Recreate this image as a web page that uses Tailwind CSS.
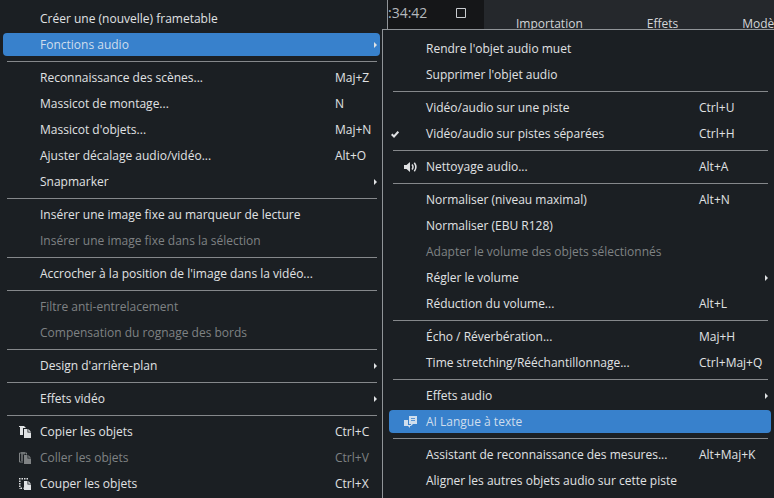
<!DOCTYPE html>
<html lang="fr">

<head>
    <meta charset="UTF-8">
    <meta name="viewport" content="width=device-width, initial-scale=1.0">
    <title>Fonctions audio</title>
    <script src="https://cdn.jsdelivr.net/npm/@tailwindcss/browser@4"></script>
</head>

<body class="relative min-h-screen overflow-hidden bg-[#1b1f23] font-['Open_Sans','Noto_Sans',sans-serif] text-xs text-[#e0e2e4]">
    <!-- Application bar behind the menus -->
    <header class="flex h-[30px] pl-[388px]">
        <div class="flex w-24 shrink-0 items-center justify-between bg-[#151618] pr-[18px] pb-1 text-[#b4b8bc]">
            <span class="text-sm">:34:42</span>
            <svg class="size-[10px]" viewBox="0 0 10 10" fill="none" stroke="#c9ccd0"><path d="M.5 .5h9v9h-9z"/></svg>
        </div>
        <nav class="flex flex-1 gap-16 overflow-hidden bg-[#25282c] pt-4 pl-8 leading-4 text-[#d3d5d8]">
            <a href="#">Importation</a>
            <a href="#">Effets</a>
            <a href="#">Modèles</a>
        </nav>
    </header>

    <!-- Main menu -->
    <div role="menu" class="absolute inset-y-0 left-0 grid w-[388px] content-start border-r border-[#909498] bg-[#1b1f23] pt-[6px] pr-[7px] pl-[3px]">
        <button role="menuitem" class="grid h-[26px] w-full grid-cols-[37px_1fr_45px] items-center text-left"><span class="col-start-2">Créer une (nouvelle) frametable</span></button>
        <button role="menuitem" class="mt-px mb-[2px] grid h-[23px] w-full grid-cols-[37px_1fr_6px] items-center rounded bg-[#3881cc] text-left text-[#cfdeed]"><span class="col-start-2">Fonctions audio</span><svg class="h-[6px] w-[3px]" viewBox="0 0 3 6" fill="#e0e2e4"><path d="M0 0l3 3-3 3z"/></svg></button>
        <hr class="mr-[3px] ml-1 my-[3px] border-[#85888b]">
        <button role="menuitem" class="grid h-[26px] w-full grid-cols-[37px_1fr_45px] items-center text-left"><span class="col-start-2">Reconnaissance des scènes...</span><span>Maj+Z</span></button>
        <button role="menuitem" class="grid h-[26px] w-full grid-cols-[37px_1fr_45px] items-center text-left"><span class="col-start-2">Massicot de montage...</span><span>N</span></button>
        <button role="menuitem" class="grid h-[26px] w-full grid-cols-[37px_1fr_45px] items-center text-left"><span class="col-start-2">Massicot d'objets...</span><span>Maj+N</span></button>
        <button role="menuitem" class="grid h-[26px] w-full grid-cols-[37px_1fr_45px] items-center text-left"><span class="col-start-2">Ajuster décalage audio/vidéo...</span><span>Alt+O</span></button>
        <button role="menuitem" class="grid h-[26px] w-full grid-cols-[37px_1fr_6px] items-center text-left"><span class="col-start-2">Snapmarker</span><svg class="h-[6px] w-[3px]" viewBox="0 0 3 6" fill="#e0e2e4"><path d="M0 0l3 3-3 3z"/></svg></button>
        <hr class="mr-[3px] ml-1 my-[3px] border-[#85888b]">
        <button role="menuitem" class="grid h-[26px] w-full grid-cols-[37px_1fr_45px] items-center text-left"><span class="col-start-2">Insérer une image fixe au marqueur de lecture</span></button>
        <button role="menuitem" disabled class="grid h-[26px] w-full grid-cols-[37px_1fr_45px] items-center text-left text-[#7f8284]"><span class="col-start-2">Insérer une image fixe dans la sélection</span></button>
        <hr class="mr-[3px] ml-1 my-[3px] border-[#85888b]">
        <button role="menuitem" class="grid h-[26px] w-full grid-cols-[37px_1fr_45px] items-center text-left"><span class="col-start-2">Accrocher à la position de l'image dans la vidéo...</span></button>
        <hr class="mr-[3px] ml-1 my-[3px] border-[#85888b]">
        <button role="menuitem" disabled class="grid h-[26px] w-full grid-cols-[37px_1fr_45px] items-center text-left text-[#7f8284]"><span class="col-start-2">Filtre anti-entrelacement</span></button>
        <button role="menuitem" disabled class="grid h-[26px] w-full grid-cols-[37px_1fr_45px] items-center text-left text-[#7f8284]"><span class="col-start-2">Compensation du rognage des bords</span></button>
        <hr class="mr-[3px] ml-1 my-[3px] border-[#85888b]">
        <button role="menuitem" class="grid h-[26px] w-full grid-cols-[37px_1fr_6px] items-center text-left"><span class="col-start-2">Design d'arrière-plan</span><svg class="h-[6px] w-[3px]" viewBox="0 0 3 6" fill="#e0e2e4"><path d="M0 0l3 3-3 3z"/></svg></button>
        <hr class="mr-[3px] ml-1 my-[3px] border-[#85888b]">
        <button role="menuitem" class="grid h-[26px] w-full grid-cols-[37px_1fr_6px] items-center text-left"><span class="col-start-2">Effets vidéo</span><svg class="h-[6px] w-[3px]" viewBox="0 0 3 6" fill="#e0e2e4"><path d="M0 0l3 3-3 3z"/></svg></button>
        <hr class="mr-[3px] ml-1 my-[3px] border-[#85888b]">
        <button role="menuitem" class="grid h-[26px] w-full grid-cols-[37px_1fr_45px] items-center text-left">
            <svg class="ml-4 h-3 w-3" viewBox="0 0 12 12" fill="currentColor"><path d="M0 0h5l2 2H4v7H1V1H0z"/><path d="M5 3h3.500v3.500H12V12H5z"/><path d="M9.300 3L12 5.700H9.300z"/></svg>
            <span>Copier les objets</span><span>Ctrl+C</span>
        </button>
        <button role="menuitem" disabled class="grid h-[26px] w-full grid-cols-[37px_1fr_45px] items-center text-left text-[#7f8284]">
            <svg class="ml-4 h-3 w-3" viewBox="0 0 12 12" fill="currentColor"><path d="M.5 1h7v1.500M.5 1v9H4" fill="none" stroke="currentColor"/><path d="M2 0h4v2.500H4V9H2z" opacity=".7"/><path d="M5 3h3.500v3.500H12V12H5z"/><path d="M9.300 3L12 5.700H9.300z"/></svg>
            <span>Coller les objets</span><span>Ctrl+V</span>
        </button>
        <button role="menuitem" class="grid h-[26px] w-full grid-cols-[37px_1fr_45px] items-center text-left">
            <svg class="ml-4 h-3 w-3" viewBox="0 0 12 12" fill="currentColor"><path d="M0 .8h10M.8 2.500v8M1.500 10.200h3" fill="none" stroke="currentColor" stroke-width="1.500" stroke-dasharray="1.500 1"/><path d="M5 3h3.500v3.500H12V12H5z"/><path d="M9.300 3L12 5.700H9.300z"/></svg>
            <span>Couper les objets</span><span>Ctrl+X</span>
        </button>
    </div>

    <!-- Audio submenu -->
    <div role="menu" class="absolute top-[29px] right-0 bottom-0 left-[382px] grid content-start border-t border-l border-[#909498] bg-[#1b1f23] pt-[6px] pr-[3px] pl-[6px]">
        <button role="menuitem" class="grid h-[26px] w-full grid-cols-[37px_1fr_72px] items-center text-left"><span class="col-start-2">Rendre l'objet audio muet</span></button>
        <button role="menuitem" class="grid h-[26px] w-full grid-cols-[37px_1fr_72px] items-center text-left"><span class="col-start-2">Supprimer l'objet audio</span></button>
        <hr class="mr-[3px] ml-1 my-[3px] border-[#85888b]">
        <button role="menuitem" class="grid h-[26px] w-full grid-cols-[37px_1fr_72px] items-center text-left"><span class="col-start-2">Vidéo/audio sur une piste</span><span>Ctrl+U</span></button>
        <button role="menuitemcheckbox" aria-checked="true" class="grid h-[26px] w-full grid-cols-[37px_1fr_72px] items-center text-left">
            <svg class="ml-[2px] h-[7px] w-2" viewBox="0 0 8 7" fill="none" stroke="currentColor" stroke-width="2"><path d="M.7 3.200L3 5.500 7.300 .7"/></svg>
            <span>Vidéo/audio sur pistes séparées</span><span>Ctrl+H</span>
        </button>
        <hr class="mr-[3px] ml-1 my-[3px] border-[#85888b]">
        <button role="menuitem" class="grid h-[26px] w-full grid-cols-[37px_1fr_72px] items-center text-left">
            <svg class="ml-[15px] h-[10px] w-[13px]" viewBox="0 0 13 10" fill="currentColor"><path d="M0 3h2.500L6 0v10L2.500 7H0z"/><path d="M8 2.500q2 2.500 0 5M10.300 .7q3.200 4.300 0 8.600" fill="none" stroke="currentColor" stroke-width="1.500"/></svg>
            <span>Nettoyage audio...</span><span>Alt+A</span>
        </button>
        <hr class="mr-[3px] ml-1 my-[3px] border-[#85888b]">
        <button role="menuitem" class="grid h-[26px] w-full grid-cols-[37px_1fr_72px] items-center text-left"><span class="col-start-2">Normaliser (niveau maximal)</span><span>Alt+N</span></button>
        <button role="menuitem" class="grid h-[26px] w-full grid-cols-[37px_1fr_72px] items-center text-left"><span class="col-start-2">Normaliser (EBU R128)</span></button>
        <button role="menuitem" disabled class="grid h-[26px] w-full grid-cols-[37px_1fr_72px] items-center text-left text-[#7f8284]"><span class="col-start-2">Adapter le volume des objets sélectionnés</span></button>
        <button role="menuitem" class="grid h-[26px] w-full grid-cols-[37px_1fr_6px] items-center text-left"><span class="col-start-2">Régler le volume</span><svg class="h-[6px] w-[3px]" viewBox="0 0 3 6" fill="#e0e2e4"><path d="M0 0l3 3-3 3z"/></svg></button>
        <button role="menuitem" class="grid h-[26px] w-full grid-cols-[37px_1fr_72px] items-center text-left"><span class="col-start-2">Réduction du volume...</span><span>Alt+L</span></button>
        <hr class="mr-[3px] ml-1 my-[3px] border-[#85888b]">
        <button role="menuitem" class="grid h-[26px] w-full grid-cols-[37px_1fr_72px] items-center text-left"><span class="col-start-2">Écho / Réverbération...</span><span>Maj+H</span></button>
        <button role="menuitem" class="grid h-[26px] w-full grid-cols-[37px_1fr_72px] items-center text-left"><span class="col-start-2">Time stretching/Rééchantillonnage...</span><span>Ctrl+Maj+Q</span></button>
        <hr class="mr-[3px] ml-1 my-[3px] border-[#85888b]">
        <button role="menuitem" class="grid h-[26px] w-full grid-cols-[37px_1fr_6px] items-center text-left"><span class="col-start-2">Effets audio</span><svg class="h-[6px] w-[3px]" viewBox="0 0 3 6" fill="#e0e2e4"><path d="M0 0l3 3-3 3z"/></svg></button>
        <button role="menuitem" class="mt-px mb-[2px] grid h-[23px] w-full grid-cols-[37px_1fr_72px] items-center rounded bg-[#3881cc] text-left text-[#cfdeed]">
            <svg class="ml-[15px] h-3 w-[13px]" viewBox="0 0 13 12" fill="currentColor"><path d="M0 4h4v5h3v1H6v2L4 10H0z"/><path d="M5 0h8v8H9L7 10V8H5z"/><path d="M7 2.500h4M7 4.500h4" stroke="#3881cc" stroke-width=".8"/></svg>
            <span>AI Langue à texte</span>
        </button>
        <hr class="mr-[3px] ml-1 my-[3px] border-[#85888b]">
        <button role="menuitem" class="grid h-[26px] w-full grid-cols-[37px_1fr_72px] items-center text-left"><span class="col-start-2">Assistant de reconnaissance des mesures...</span><span>Alt+Maj+K</span></button>
        <button role="menuitem" class="grid h-[26px] w-full grid-cols-[37px_1fr_72px] items-center text-left"><span class="col-start-2">Aligner les autres objets audio sur cette piste</span></button>
    </div>
</body>

</html>
